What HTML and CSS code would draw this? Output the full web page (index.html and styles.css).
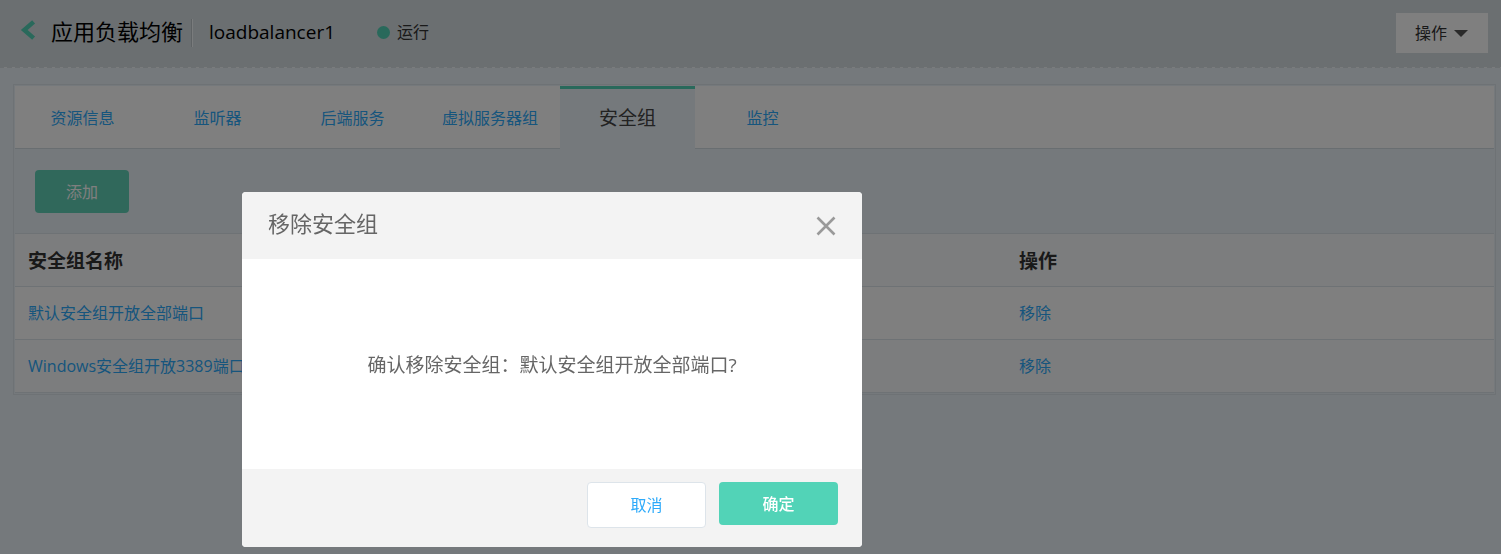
FILE: index.html
```html
<!DOCTYPE html>
<html lang="zh-CN">
<head>
<meta charset="utf-8">
<title>应用负载均衡</title>
<link rel="stylesheet" href="styles.css">
</head>
<body>
<header class="topbar">
  <a class="back" href="#" aria-label="返回">
    <svg width="16" height="20" viewBox="0 0 16 20"><path d="M13.6 1.8 4.2 10l9.4 8.2" fill="none" stroke="currentColor" stroke-width="4.4"/></svg>
  </a>
  <h1 class="title">应用负载均衡</h1>
  <span class="divider"></span>
  <span class="name">loadbalancer1</span>
  <span class="status"><i class="dot"></i>运行</span>
  <button class="actions" type="button">操作<i class="caret"></i></button>
</header>
<main class="panel">
  <nav class="tabs">
    <a class="tab" href="#">资源信息</a>
    <a class="tab" href="#">监听器</a>
    <a class="tab" href="#">后端服务</a>
    <a class="tab" href="#">虚拟服务器组</a>
    <a class="tab active" href="#">安全组</a>
    <a class="tab" href="#">监控</a>
    <span class="rest"></span>
  </nav>
  <div class="toolbar"><button class="btn add" type="button">添加</button></div>
  <table class="groups">
    <thead><tr><th class="col-name">安全组名称</th><th>操作</th></tr></thead>
    <tbody>
      <tr><td><a href="#">默认安全组开放全部端口</a></td><td><a href="#">移除</a></td></tr>
      <tr><td><a href="#">Windows安全组开放3389端口</a></td><td><a href="#">移除</a></td></tr>
    </tbody>
  </table>
</main>
<div class="overlay">
  <section class="modal" role="dialog" aria-modal="true" aria-labelledby="modal-title">
    <div class="modal-head">
      <h2 class="modal-title" id="modal-title">移除安全组</h2>
      <button class="close" type="button" aria-label="关闭">
        <svg width="20" height="20" viewBox="0 0 20 20"><path d="M1.5 1.5l17 17M18.5 1.5l-17 17" stroke="currentColor" stroke-width="2.6"/></svg>
      </button>
    </div>
    <p class="modal-body">确认移除安全组：默认安全组开放全部端口?</p>
    <div class="modal-foot">
      <button class="btn cancel" type="button">取消</button>
      <button class="btn ok" type="button">确定</button>
    </div>
  </section>
</div>
</body>
</html>
```

FILE: styles.css
```css
* {
  box-sizing: border-box;
}

body {
  margin: 0;
  min-height: 100vh;
  background: #ebf2f8;
  color: #333;
  font: 16px/24px "Open Sans", "Noto Sans CJK SC", sans-serif;
}

a {
  color: #2daafa;
  text-decoration: none;
}

button {
  border: 0;
  font: inherit;
  cursor: pointer;
}

.topbar {
  position: relative;
  display: flex;
  align-items: center;
  height: 68px;
  padding: 0 13px 4px 20px;
  background: #d6dee2;
}

.topbar::after {
  content: "";
  position: absolute;
  left: 0;
  right: 0;
  bottom: 0;
  height: 1px;
  background: repeating-linear-gradient(90deg, #d6dee2 0 4px, #f4f8fa 4px 7px, #d6dee2 7px 8px);
}

.back {
  height: 20px;
  margin: 0 15px 4px 0;
  color: #52d3b7;
}

.back svg {
  display: block;
}

.title {
  margin: 0;
  padding-bottom: 3px;
  color: #000;
  font-size: 22px;
  font-weight: 400;
}

.divider {
  width: 2px;
  height: 28px;
  margin: 2px 16px 0 8px;
  border-left: 1px solid #bcc4c8;
  background: #f4f8fa;
}

.name {
  color: #000;
  font-size: 19px;
}

.status {
  display: flex;
  align-items: center;
  gap: 7px;
  margin-left: 42px;
}

.dot {
  width: 13px;
  height: 13px;
  border-radius: 50%;
  background: #52d3b7;
}

.actions {
  display: flex;
  align-items: center;
  gap: 7px;
  height: 40px;
  margin: 2px 0 0 auto;
  padding: 0 20px 0 19px;
  background: #fff;
  color: #333;
}

.caret {
  border: 7px solid transparent;
  border-top-color: #555;
  border-bottom: 0;
}

.panel {
  margin: 16px 5px 16px 13px;
  padding: 1px;
  border: 1px solid #dde4ea;
}

.tabs {
  display: flex;
  height: 63px;
}

.tab {
  display: flex;
  align-items: center;
  justify-content: center;
  min-width: 135px;
  padding: 1px 22px 0;
  border-bottom: 1px solid #d3dce3;
  background: #fff;
}

.tab.active {
  padding: 0 22px 3px;
  border-top: 3px solid #52d3b7;
  border-bottom: 0;
  background: #ebf2f8;
  color: #444;
  font-size: 19px;
}

.rest {
  flex: 1;
  border-bottom: 1px solid #d3dce3;
  background: #fff;
}

.toolbar {
  padding: 21px 20px 20px;
}

.btn {
  display: block;
  height: 43px;
  border-radius: 4px;
}

.add {
  width: 94px;
  background: #60d0b6;
  color: #fff;
}

.groups {
  width: 100%;
  table-layout: fixed;
  border-collapse: separate;
  border-spacing: 0;
  background: #fff;
}

.groups th,
.groups td {
  height: 53px;
  padding: 0 13px;
  border-top: 1px solid #dde4ea;
  text-align: left;
}

.groups th {
  padding-top: 2px;
  background: #f9fafc;
  font-size: 19px;
}

.col-name {
  width: 67%;
}

.groups tr:last-child td {
  height: 54px;
  border-bottom: 1px solid #dde4ea;
}

.groups tbody tr:first-child td {
  height: 53px;
}

.groups tbody tr:last-child td {
  background: #f9fafc;
}

.overlay {
  position: fixed;
  inset: 0;
  padding: 192px 0 0 242px;
  background: rgba(0, 0, 0, 0.5);
}

.modal {
  width: 620px;
  max-width: 100%;
  overflow: hidden;
  border-radius: 4px;
  background: #fff;
  color: #666;
}

.modal-head {
  display: flex;
  align-items: center;
  justify-content: space-between;
  height: 67px;
  padding: 0 26px;
  background: #f3f3f3;
}

.modal-title {
  margin: 0;
  padding-bottom: 5px;
  font-size: 22px;
  font-weight: 400;
}

.close {
  padding: 0;
  background: none;
  color: #999;
}

.close svg {
  display: block;
}

.modal-body {
  margin: 0;
  padding: 94px 26px 92px;
  font-size: 19px;
  text-align: center;
}

.modal-foot {
  display: flex;
  justify-content: flex-end;
  gap: 13px;
  height: 78px;
  padding: 13px 24px 0;
  background: #f3f3f3;
}

.cancel,
.ok {
  width: 119px;
}

.cancel {
  height: 46px;
  border: 1px solid #dde4ea;
  background: #fff;
  color: #2daafa;
}

.ok {
  background: #52d3b7;
  color: #fff;
  font-weight: 500;
}
```
